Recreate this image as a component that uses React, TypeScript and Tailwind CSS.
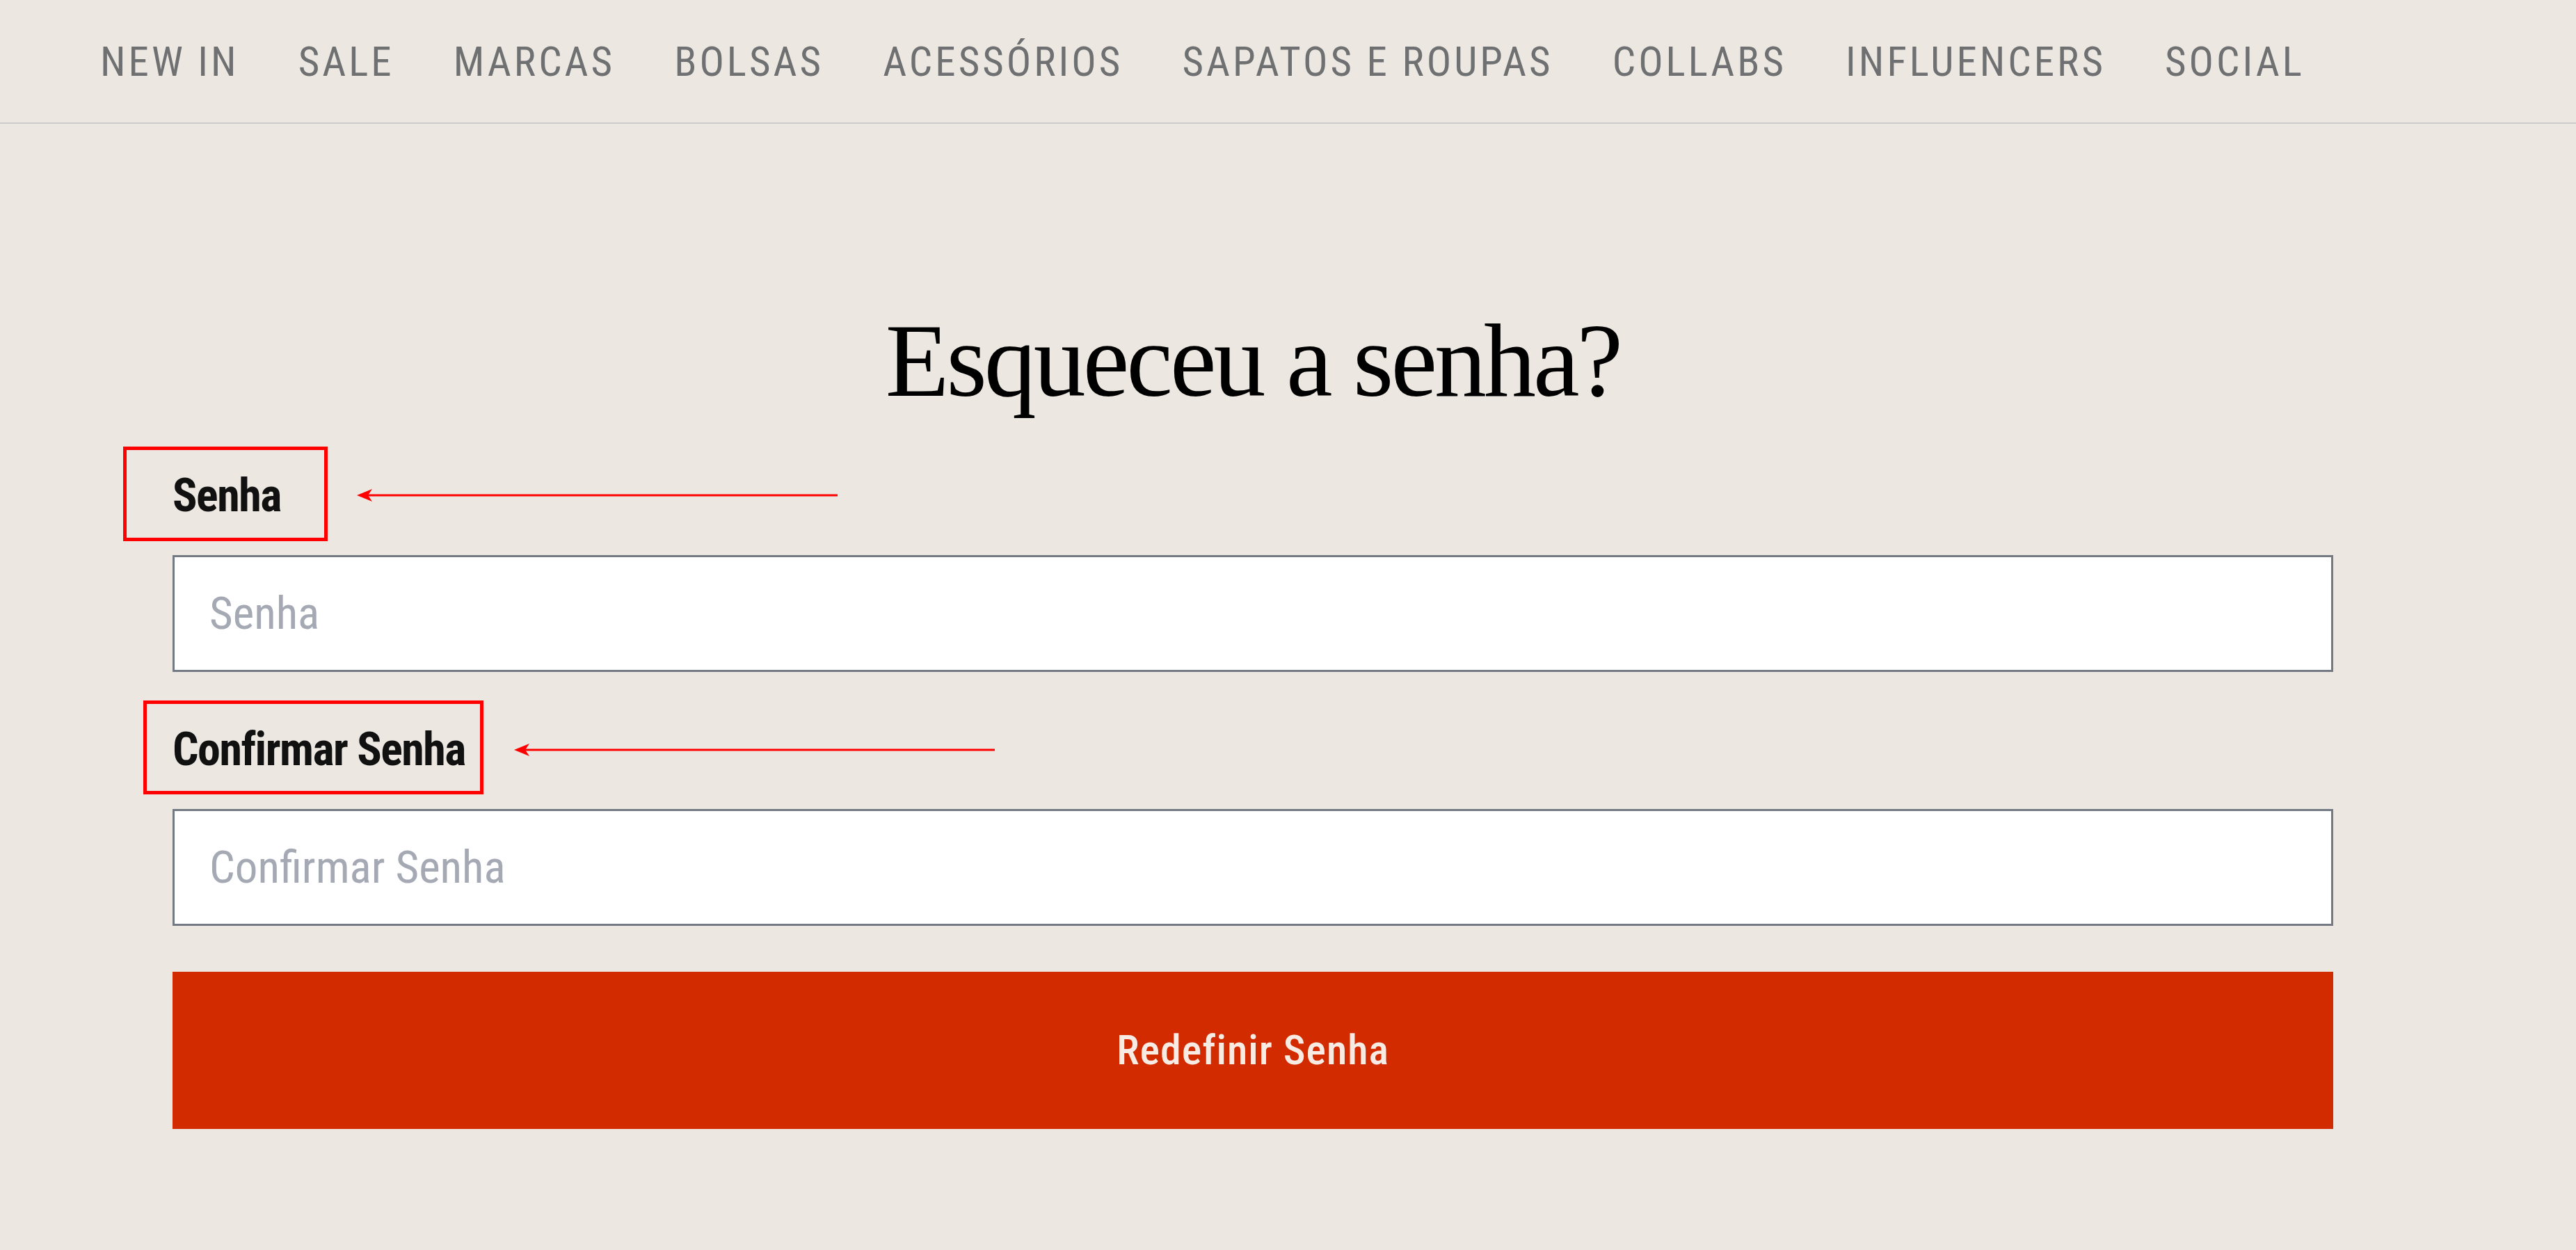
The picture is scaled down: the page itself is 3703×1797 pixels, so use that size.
import React from 'react';

const navItems = [
  'NEW IN',
  'SALE',
  'MARCAS',
  'BOLSAS',
  'ACESSÓRIOS',
  'SAPATOS E ROUPAS',
  'COLLABS',
  'INFLUENCERS',
  'SOCIAL',
];

const condensed = "font-['Roboto_Condensed','Liberation_Sans_Narrow',Roboto,sans-serif] font-stretch-condensed";

// red annotation arrow pointing left
const Arrow: React.FC<{ className: string }> = ({ className }) => (
  <svg className={className} width="691" height="24" viewBox="0 0 691 24">
    <line x1="14" y1="12" x2="691" y2="12" stroke="#ff0000" strokeWidth="3" />
    <polygon points="0,12 22,3 16,12 22,21" fill="#ff0000" />
  </svg>
);

interface FieldProps {
  label: string;
  boxClass: string;
  arrowClass: string;
}

const Field: React.FC<FieldProps> = ({ label, boxClass, arrowClass }) => (
  <div className="flex flex-col gap-[50px]">
    <div className="relative">
      <label className={`block text-[66px] font-bold leading-[70px] tracking-[-1.5px] text-[#111] ${condensed}`}>
        {label}
      </label>
      {/* annotation */}
      <div className={`absolute border-[5px] border-[#ff0000] ${boxClass}`} />
      <Arrow className={`absolute ${arrowClass}`} />
    </div>
    <input
      type="password"
      placeholder={label}
      className={`block h-[168px] w-full border-[3px] border-[#747a84] bg-white pl-[50px] text-[65px] text-[#333] outline-none placeholder:text-[#a4a9b4] ${condensed}`}
    />
  </div>
);

const App: React.FC = () => {
  return (
    <div className="min-h-screen bg-[#ece8e1]">
      {/* Top navigation */}
      <nav className="h-[178px] border-b-2 border-[#cdccca]">
        <ul className={`flex h-full items-center gap-[85px] pl-[144px] ${condensed}`}>
          {navItems.map(item => (
            <li key={item} className="text-[59px] leading-none tracking-[4px] text-[#6f7072]">
              {item}
            </li>
          ))}
        </ul>
      </nav>

      <main className="pl-[248px] pt-[265px]">
        <form className="flex w-[3106px] flex-col" onSubmit={e => e.preventDefault()}>
          <h1 className="mb-[85px] text-center font-['Liberation_Serif',serif] text-[150px] leading-none tracking-[-4px] text-black">
            Esqueceu a senha?
          </h1>

          <div className="flex flex-col gap-[77px]">
            <Field
              label="Senha"
              boxClass="-top-[36px] -left-[71px] h-[136px] w-[294px]"
              arrowClass="top-[22px] left-[265px]"
            />
            <Field
              label="Confirmar Senha"
              boxClass="-top-[36px] -left-[42px] h-[135px] w-[489px]"
              arrowClass="top-[23px] left-[491px]"
            />
          </div>

          <button
            className={`mt-[66px] block h-[226px] w-full bg-[#d32b00] text-[60px] font-medium tracking-[1px] text-[#f7ebe3] ${condensed}`}
          >
            Redefinir Senha
          </button>
        </form>
      </main>
    </div>
  );
};

export default App;
